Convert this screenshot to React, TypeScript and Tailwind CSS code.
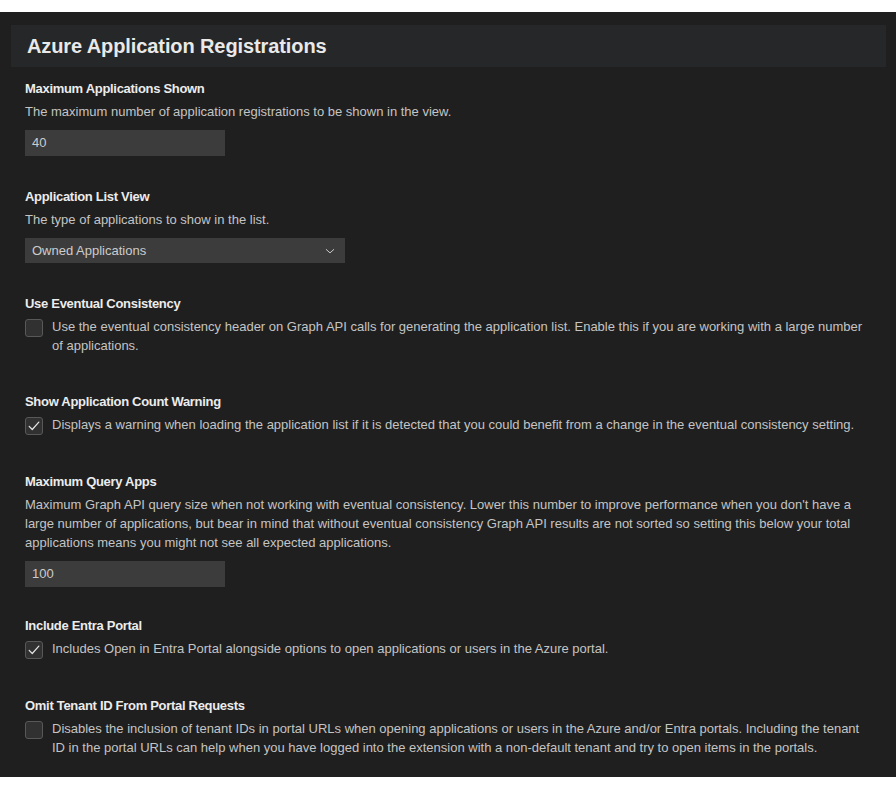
import { ReactNode } from "react";

function Label({ children }: { children: ReactNode }) {
  return (
    <div className="text-[13px] leading-[18px] font-bold tracking-[-0.3px] text-[#ececec]">
      {children}
    </div>
  );
}

function Description({ children }: { children: ReactNode }) {
  return (
    <div className="mt-[4px] text-[13px] leading-[19px] text-[#c4c4c4]">
      {children}
    </div>
  );
}

function TextInput({ value }: { value: string }) {
  return (
    <div className="mt-[9px] flex h-[26px] w-[200px] items-center bg-[#3c3c3c] px-[7px] text-[13px] text-[#cccccc]">
      {value}
    </div>
  );
}

function Checkbox({ checked }: { checked: boolean }) {
  return (
    <div className="mt-[2px] flex h-[18px] w-[18px] shrink-0 items-center justify-center rounded-[3px] border border-[#585858] bg-[#313131]">
      {checked && (
        <svg width="14" height="14" viewBox="0 0 16 16" fill="none">
          <path
            d="M2.5 8.5L6 12L13.5 3.5"
            stroke="#e4e4e4"
            strokeWidth="1.4"
            strokeLinecap="round"
            strokeLinejoin="round"
          />
        </svg>
      )}
    </div>
  );
}

function CheckSetting({
  title,
  text,
  checked,
}: {
  title: string;
  text: string;
  checked: boolean;
}) {
  return (
    <div className="pt-3 pb-[26px]">
      <Label>{title}</Label>
      <div className="mt-[4px] flex">
        <Checkbox checked={checked} />
        <div className="ml-[9px] text-[13px] leading-[19px] text-[#c4c4c4]">
          {text}
        </div>
      </div>
    </div>
  );
}

export default function App() {
  return (
    <div className="min-h-[790px] bg-white pt-3 font-['Liberation_Sans',Arial,sans-serif]">
      <div className="h-[765px] overflow-hidden bg-[#1f1f1f]">
        <div className="mt-[13px] ml-[11px] mr-[10px] flex h-[42px] items-center bg-[#262729] pl-4">
          <h1 className="text-[20px] font-bold tracking-[-0.1px] text-[#e9e9e9]">
            Azure Application Registrations
          </h1>
        </div>

        <div className="ml-[25px] mr-6">
          <div className="pt-[13px] pb-5">
            <Label>Maximum Applications Shown</Label>
            <Description>
              The maximum number of application registrations to be shown in the view.
            </Description>
            <TextInput value="40" />
          </div>

          <div className="pt-3 pb-5">
            <Label>Application List View</Label>
            <Description>The type of applications to show in the list.</Description>
            <div className="mt-[9px] flex h-[25px] w-[320px] items-center justify-between bg-[#3c3c3c] pl-[7px] pr-[9px] text-[13px] text-[#cccccc]">
              <span>Owned Applications</span>
              <svg width="12" height="12" viewBox="0 0 16 16" fill="none">
                <path
                  d="M3 6L8 10.5L13 6"
                  stroke="#cccccc"
                  strokeWidth="1.3"
                  strokeLinecap="round"
                  strokeLinejoin="round"
                />
              </svg>
            </div>
          </div>

          <CheckSetting
            title="Use Eventual Consistency"
            checked={false}
            text="Use the eventual consistency header on Graph API calls for generating the application list. Enable this if you are working with a large number of applications."
          />

          <CheckSetting
            title="Show Application Count Warning"
            checked={true}
            text="Displays a warning when loading the application list if it is detected that you could benefit from a change in the eventual consistency setting."
          />

          <div className="pt-3 pb-[18px]">
            <Label>Maximum Query Apps</Label>
            <Description>
              Maximum Graph API query size when not working with eventual consistency. Lower this number to improve performance when you don't have a large number of applications, but bear in mind that without eventual consistency Graph API results are not sorted so setting this below your total applications means you might not see all expected applications.
            </Description>
            <TextInput value="100" />
          </div>

          <CheckSetting
            title="Include Entra Portal"
            checked={true}
            text="Includes Open in Entra Portal alongside options to open applications or users in the Azure portal."
          />

          <CheckSetting
            title="Omit Tenant ID From Portal Requests"
            checked={false}
            text="Disables the inclusion of tenant IDs in portal URLs when opening applications or users in the Azure and/or Entra portals. Including the tenant ID in the portal URLs can help when you have logged into the extension with a non-default tenant and try to open items in the portals."
          />
        </div>
      </div>
    </div>
  );
}
